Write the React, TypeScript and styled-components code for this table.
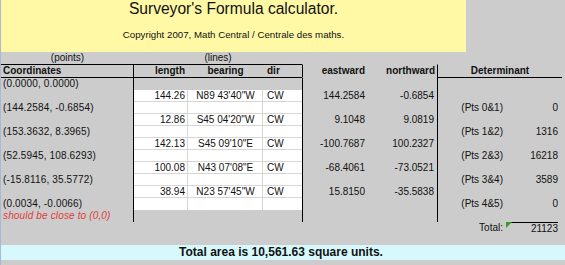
import React from "react";
import styled, { createGlobalStyle, css } from "styled-components";

const Global = createGlobalStyle`
  html, body { margin: 0; padding: 0; background: #cccccc; }
  body { font-family: "Liberation Sans", Arial, sans-serif; color: #111; }
`;

const Page = styled.div`
  width: 564px;
  height: 265px;
  border-left: 1px solid #a9b8d8;
  background: #cccccc;
  overflow: hidden;
  display: flex;
  flex-direction: column;
`;

const Banner = styled.header`
  width: 465px;
  height: 52px;
  background: #fff9a6;
  display: flex;
  flex-direction: column;
  align-items: center;
  box-sizing: border-box;
  padding-top: 0;
`;

const Title = styled.h1`
  margin: 0;
  font-size: 15.6px;
  font-weight: normal;
  line-height: 18px;
`;

const Copyright = styled.p`
  margin: 11px 0 0;
  font-size: 9.7px;
  line-height: 12px;
`;

const Sheet = styled.div`
  display: grid;
  grid-template-columns: 133px 54px 75px 39px 65px 70px 70px 55px;
  grid-template-rows: 12px 14px repeat(13, 12px);
  font-size: 10px;
  line-height: 12px;
`;

const cellBase = css`
  box-sizing: border-box;
  white-space: nowrap;
  overflow: visible;
`;

const GroupLabel = styled.div<{ $span: number }>`
  ${cellBase};
  grid-column: span ${(p) => p.$span};
  text-align: center;
  line-height: 11px;
`;

const Blank = styled.div<{ $span?: number }>`
  grid-column: span ${(p) => p.$span ?? 1};
`;

const HeadCell = styled.div<{
  $align: "left" | "right" | "center";
  $pad?: number;
  $rule?: boolean;
  $divider?: "left" | "right";
  $span?: number;
  $under?: boolean;
}>`
  ${cellBase};
  font-weight: bold;
  grid-column: span ${(p) => p.$span ?? 1};
  text-align: ${(p) => p.$align};
  padding: 0 ${(p) => (p.$align === "right" ? p.$pad ?? 2 : 0)}px 0
    ${(p) => (p.$align === "left" ? p.$pad ?? 2 : 0)}px;
  line-height: 12px;
  border-top: 1px solid ${(p) => (p.$rule ? "#000" : "transparent")};
  border-bottom: 1px solid
    ${(p) => (p.$rule || p.$under ? "#000" : "transparent")};
  ${(p) => p.$divider === "left" && "border-left: 1px solid #000;"}
  ${(p) => p.$divider === "right" && "border-right: 1px solid #000;"}
`;

const CoordCell = styled.div<{ $warn?: boolean }>`
  ${cellBase};
  border-right: 1px solid #000;
  padding-left: 2px;
  letter-spacing: 0.15px;
  ${(p) =>
    p.$warn &&
    css`
      color: #e23a3a;
      font-style: italic;
    `}
`;

const LineCell = styled.div<{
  $align: "left" | "right" | "center";
  $edge?: boolean;
  $last?: boolean;
}>`
  ${cellBase};
  background: #fff;
  text-align: ${(p) => p.$align};
  padding: ${(p) => (p.$align === "right" ? "0 3px 0 0" : p.$align === "left" ? "0 0 0 4px" : "0")};
  box-shadow: inset ${(p) => (p.$edge ? "0" : "-1px")} ${(p) => (p.$last ? "0" : "-1px")} 0 #d6d6d6;
`;

const GrayLines = styled.div`
  grid-column: span 3;
`;

const NumCell = styled.div<{ $divider?: boolean; $pad: number }>`
  ${cellBase};
  text-align: right;
  padding-right: ${(p) => p.$pad}px;
  ${(p) => p.$divider && "border-left: 1px solid #000;"}
`;

const TotalValue = styled.div`
  ${cellBase};
  position: relative;
  text-align: right;
  margin: 0 4px 0 3px;
  padding-right: 0;
  border-top: 1px solid #000;
  line-height: 11px;
`;

const Flag = styled.span`
  position: absolute;
  left: -4px;
  top: -1px;
  width: 0;
  height: 0;
  border-top: 6px solid #3c9a28;
  border-right: 6px solid transparent;
`;

const Spacer = styled.div`
  height: 11px;
`;

const AreaBar = styled.footer`
  height: 15px;
  background: #d7f9fd;
  font-size: 12px;
  font-weight: bold;
  line-height: 15px;
  text-align: center;
  padding-right: 4px;
`;

type LineRow = { length: string; bearing: string; dir: string; east: string; north: string };
type DetRow = { label: string; value: string };

const coords = [
  "(0.0000, 0.0000)",
  "",
  "(144.2584, -0.6854)",
  "",
  "(153.3632, 8.3965)",
  "",
  "(52.5945, 108.6293)",
  "",
  "(-15.8116, 35.5772)",
  "",
  "(0.0034, -0.0066)",
];

const lines: LineRow[] = [
  { length: "144.26", bearing: "N89 43'40\"W", dir: "CW", east: "144.2584", north: "-0.6854" },
  { length: "12.86", bearing: "S45 04'20\"W", dir: "CW", east: "9.1048", north: "9.0819" },
  { length: "142.13", bearing: "S45 09'10\"E", dir: "CW", east: "-100.7687", north: "100.2327" },
  { length: "100.08", bearing: "N43 07'08\"E", dir: "CW", east: "-68.4061", north: "-73.0521" },
  { length: "38.94", bearing: "N23 57'45\"W", dir: "CW", east: "15.8150", north: "-35.5838" },
];

const dets: DetRow[] = [
  { label: "(Pts 0&1)", value: "0" },
  { label: "(Pts 1&2)", value: "1316" },
  { label: "(Pts 2&3)", value: "16218" },
  { label: "(Pts 3&4)", value: "3589" },
  { label: "(Pts 4&5)", value: "0" },
];

function DataRow({ index }: { index: number }) {
  const isLine = index % 2 === 1 && index <= 9;
  const isWhite = index >= 1 && index <= 10;
  const line = isLine ? lines[(index - 1) / 2] : null;
  const det = index % 2 === 0 && index >= 2 && index <= 10 ? dets[index / 2 - 1] : null;
  const last = index === 10;
  return (
    <>
      {index === 11 ? (
        <CoordCell $warn>should be close to (0,0)</CoordCell>
      ) : (
        <CoordCell>{coords[index]}</CoordCell>
      )}
      {isWhite ? (
        <>
          <LineCell $align="right" $last={last}>{line?.length}</LineCell>
          <LineCell $align="center" $last={last}>{line?.bearing}</LineCell>
          <LineCell $align="left" $edge $last={last}>{line?.dir}</LineCell>
        </>
      ) : (
        <GrayLines />
      )}
      <NumCell $divider $pad={2}>{line?.east}</NumCell>
      <NumCell $pad={3}>{line?.north}</NumCell>
      <NumCell $divider $pad={4}>{det?.label}</NumCell>
      <NumCell $pad={4}>{det?.value}</NumCell>
    </>
  );
}

export default function App() {
  return (
    <>
      <Global />
      <Page>
        <Banner>
          <Title>Surveyor's Formula calculator.</Title>
          <Copyright>Copyright 2007, Math Central / Centrale des maths.</Copyright>
        </Banner>
        <Sheet>
          <GroupLabel $span={1}>(points)</GroupLabel>
          <GroupLabel $span={3}>(lines)</GroupLabel>
          <Blank $span={4} />

          <HeadCell $align="left" $rule $divider="right">Coordinates</HeadCell>
          <HeadCell $align="right" $pad={3} $rule>length</HeadCell>
          <HeadCell $align="center" $rule>bearing</HeadCell>
          <HeadCell $align="left" $pad={4} $rule>dir</HeadCell>
          <HeadCell $align="right" $pad={2} $divider="left">eastward</HeadCell>
          <HeadCell $align="right" $pad={2}>northward</HeadCell>
          <HeadCell $align="center" $span={2} $divider="left" $under>Determinant</HeadCell>

          {Array.from({ length: 12 }, (_, i) => (
            <DataRow key={i} index={i} />
          ))}

          <Blank $span={6} />
          <NumCell $pad={4}>Total:</NumCell>
          <TotalValue>
            <Flag />
            21123
          </TotalValue>
        </Sheet>
        <Spacer />
        <AreaBar>Total area is 10,561.63 square units.</AreaBar>
      </Page>
    </>
  );
}
